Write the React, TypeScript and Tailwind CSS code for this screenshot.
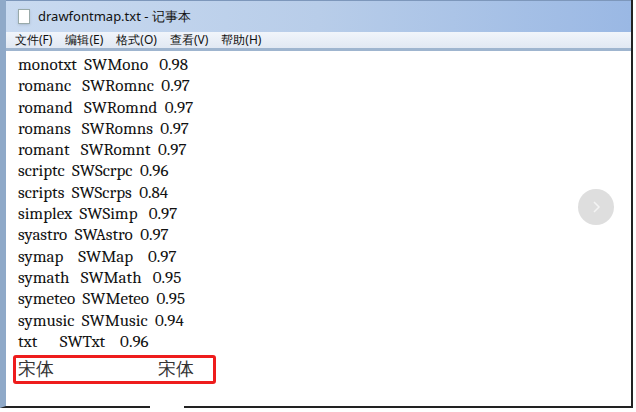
const rows = [
  "monotxt  SWMono   0.98",
  "romanc   SWRomnc  0.97",
  "romand   SWRomnd  0.97",
  "romans   SWRomns  0.97",
  "romant   SWRomnt  0.97",
  "scriptc  SWScrpc  0.96",
  "scripts  SWScrps  0.84",
  "simplex  SWSimp   0.97",
  "syastro  SWAstro  0.97",
  "symap    SWMap    0.97",
  "symath   SWMath   0.95",
  "symeteo  SWMeteo  0.95",
  "symusic  SWMusic  0.94",
  "txt      SWTxt    0.96",
];

export default function App() {
  return (
    <div className="w-[636px] h-[412px] bg-white relative overflow-hidden">
      <div className="w-[633px] h-[408px] flex flex-col border-l-[6px] border-r-2 border-b-2 border-l-[#8fa9c8] border-r-[#222] border-b-[#222] bg-white">
        <div className="h-[32px] shrink-0 flex items-center gap-2 pl-3 bg-gradient-to-r from-[#c9daf0] via-[#b8cde9] to-[#9ab8e4] border-t border-[#7d97bb]">
          <div className="w-[12px] h-[15px] bg-white border border-[#9aa] shadow-sm" />
          <span className="text-[13px] text-[#111] font-['Noto_Sans_CJK_SC',sans-serif]">drawfontmap.txt - 记事本</span>
        </div>
        <div className="h-[19px] shrink-0 flex items-center gap-[13px] pl-[9px] bg-gradient-to-b from-[#f1f5fb] to-[#e1e8f3] border-b-[3px] border-[#9fb5cf] text-[12px] text-[#111] font-['Noto_Sans_CJK_SC',sans-serif]">
          <span>文件(F)</span><span>编辑(E)</span><span>格式(O)</span><span>查看(V)</span><span>帮助(H)</span>
        </div>
        <div className="pt-[3px] pl-[12px] font-serif text-[17px] leading-[21.3px] text-[#111] whitespace-pre">
          {rows.map(r => <div key={r}>{r}</div>)}
          <div className="mt-[3px] -ml-[5px] w-[203px] h-[29px] border-[3px] border-[#ee1c1c] rounded-[3px] flex items-center pl-[2px] font-['Noto_Sans_CJK_SC',sans-serif] text-[18px] text-[#333]">
            <span className="w-[140px]">宋体</span><span>宋体</span>
          </div>
        </div>
      </div>
      <div className="absolute left-[578px] top-[189px] w-[36px] h-[36px] rounded-full bg-[#dedede] flex items-center justify-center">
        <svg width="14" height="14" viewBox="0 0 14 14" fill="none" stroke="#f4f4f4" strokeWidth="1.5"><path d="M5 2l5 5-5 5" /></svg>
      </div>
      <div className="absolute left-[150px] top-[404px] w-[34px] h-[8px] bg-white" />
    </div>
  );
}
